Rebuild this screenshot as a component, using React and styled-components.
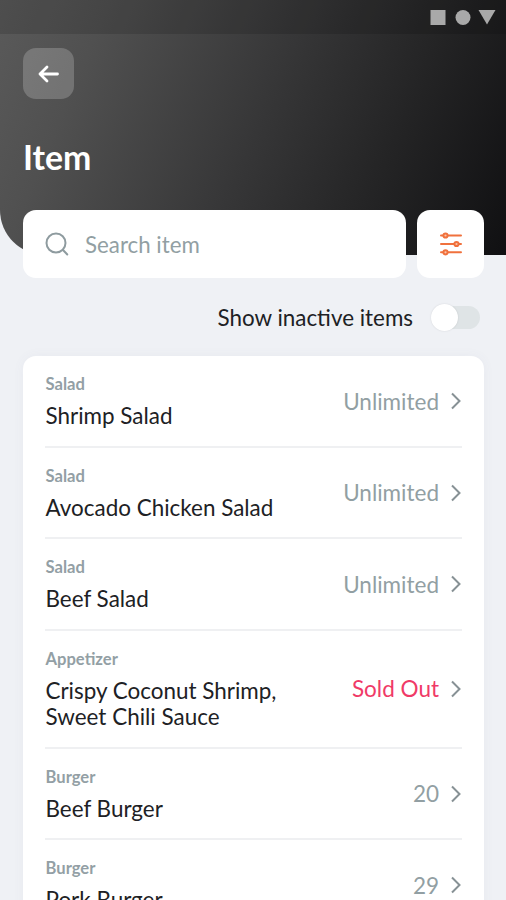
import React from 'react';
import styled, { createGlobalStyle } from 'styled-components';

const GlobalStyle = createGlobalStyle`
  * {
    box-sizing: border-box;
  }
  body {
    margin: 0;
    background: #eff1f5;
    font-family: Lato, 'Liberation Sans', sans-serif;
  }
`;

const Screen = styled.div`
  width: 506px;
  height: 900px;
  overflow: hidden;
  background: #eff1f5;
`;
const Header = styled.header`
  height: 255px;
  border-bottom-left-radius: 45px;
  background: linear-gradient(113deg, #5a5a5a 0%, #505050 18%, #363637 51%, #242425 74%, #101012 100%);
`;
const StatusBar = styled.div`
  display: flex;
  justify-content: flex-end;
  height: 34px;
  padding: 9px 10px 0 0;
  background: rgba(0, 0, 0, 0.13);
`;
const HeaderContent = styled.div`
  padding: 14px 23px 0;
`;
const BackButton = styled.button`
  display: flex;
  align-items: center;
  justify-content: center;
  width: 51px;
  height: 51px;
  padding: 0;
  border: none;
  border-radius: 13px;
  background: rgba(255, 255, 255, 0.2);
`;
const Title = styled.h1`
  margin: 37px 0 0;
  color: #fff;
  font-size: 33.8px;
  line-height: 42px;
  font-weight: 700;
`;
const Toolbar = styled.div`
  display: flex;
  gap: 11px;
  margin: -45px 22px 0 23px;
`;
const SearchBox = styled.label`
  display: flex;
  align-items: center;
  flex: 1;
  height: 68px;
  padding-left: 22px;
  gap: 16px;
  border-radius: 13px;
  background: #fff;
`;
const SearchText = styled.span`
  color: #929fa3;
  font-size: 22.3px;
`;
const FilterButton = styled.button`
  display: flex;
  align-items: center;
  justify-content: center;
  width: 67px;
  height: 68px;
  padding: 0;
  border: none;
  border-radius: 13px;
  background: #fff;
`;
const ToggleRow = styled.div`
  display: flex;
  align-items: center;
  justify-content: flex-end;
  gap: 17px;
  height: 78.4px;
  padding-right: 26px;
`;
const ToggleLabel = styled.span`
  color: #202124;
  font-size: 22.4px;
`;
const Toggle = styled.span`
  display: flex;
  align-items: center;
  width: 50px;
  height: 23px;
  background: linear-gradient(#dfe4e6, #dfe4e6) right / 44px 23px no-repeat;
  border-radius: 12px;
`;
const Knob = styled.span`
  flex: none;
  width: 27px;
  height: 27px;
  margin-left: 1px;
  border-radius: 50%;
  background: #fff;
  box-shadow: 0 0 2px rgba(0, 0, 0, 0.12);
`;
const List = styled.ul`
  margin: 0 22px 0 23px;
  padding: 0 22px;
  list-style: none;
  background: #fff;
  border-radius: 13px 13px 0 0;
  box-shadow: 0 0 12px rgba(90, 100, 130, 0.05);
`;
const Row = styled.li`
  display: flex;
  align-items: center;
  justify-content: space-between;
  height: ${({ $tall }) => ($tall ? '118px' : '91.5px')};
  border-bottom: 2px solid #eff0f2;
`;
const ItemText = styled.div`
  padding: 2px 0 0 0.5px;
`;
const Category = styled.div`
  color: #939fa5;
  font-size: 16.6px;
  line-height: 20px;
  font-weight: 700;
`;
const Name = styled.div`
  width: 250px;
  margin-top: 9px;
  color: #202124;
  font-size: 22.45px;
  line-height: 26.5px;
`;
const Stock = styled.div`
  display: flex;
  align-items: center;
  gap: 10px;
  color: ${({ $soldOut }) => ($soldOut ? '#f03a67' : '#929fa3')};
  font-size: 22.5px;
`;

const StatusIcons = () => (
  <svg width="66" height="17" viewBox="0 0 66 17" fill="#a9a9a9">
    <rect x="0.500" y="1" width="15" height="15" />
    <circle cx="33" cy="8.500" r="7.500" />
    <path d="M48.500 1h17L57 15.500z" />
  </svg>
);

const BackIcon = () => (
  <svg width="22" height="20" viewBox="0 0 22 20" fill="none" stroke="#fff" strokeWidth="2.8" strokeLinecap="round" strokeLinejoin="round">
    <path d="M19.500 10H2M9 3L2 10l7 7" />
  </svg>
);

const SearchIcon = () => (
  <svg width="24" height="24" viewBox="0 0 24 24" fill="none" stroke="#8e9b9f" strokeWidth="2" strokeLinecap="round">
    <circle cx="11" cy="11" r="9.500" />
    <path d="M18 18l4.300 4.500" />
  </svg>
);

const FilterIcon = () => (
  <svg width="24" height="24" viewBox="0 0 24 24" fill="#f9c5ab" stroke="#f0713d" strokeWidth="2" strokeLinecap="round">
    <path d="M2 3.500h20M2 12h20M2 20.300h20" />
    <circle cx="6.500" cy="3.500" r="2.100" />
    <circle cx="17.500" cy="12" r="2.100" />
    <circle cx="6.500" cy="20.300" r="2.100" />
  </svg>
);

const Chevron = () => (
  <svg width="13" height="18" viewBox="0 0 13 18" fill="none" stroke="#879195" strokeWidth="2">
    <path d="M3 1.500l7.500 7.500L3 16.500" />
  </svg>
);

const items = [
  { category: 'Salad', name: 'Shrimp Salad', stock: 'Unlimited' },
  { category: 'Salad', name: 'Avocado Chicken Salad', stock: 'Unlimited' },
  { category: 'Salad', name: 'Beef Salad', stock: 'Unlimited' },
  { category: 'Appetizer', name: 'Crispy Coconut Shrimp, Sweet Chili Sauce', stock: 'Sold Out', soldOut: true, tall: true },
  { category: 'Burger', name: 'Beef Burger', stock: '20' },
  { category: 'Burger', name: 'Pork Burger', stock: '29' },
];

const App = () => (
  <>
    <GlobalStyle />
    <Screen>
      <Header>
        <StatusBar><StatusIcons /></StatusBar>
        <HeaderContent>
          <BackButton aria-label="Back"><BackIcon /></BackButton>
          <Title>Item</Title>
        </HeaderContent>
      </Header>
      <Toolbar>
        <SearchBox>
          <SearchIcon />
          <SearchText>Search item</SearchText>
        </SearchBox>
        <FilterButton aria-label="Filter"><FilterIcon /></FilterButton>
      </Toolbar>
      <ToggleRow>
        <ToggleLabel>Show inactive items</ToggleLabel>
        <Toggle><Knob /></Toggle>
      </ToggleRow>
      <List>
        {items.map((item) => (
          <Row key={item.name} $tall={item.tall}>
            <ItemText>
              <Category>{item.category}</Category>
              <Name>{item.name}</Name>
            </ItemText>
            <Stock $soldOut={item.soldOut}>
              {item.stock}
              <Chevron />
            </Stock>
          </Row>
        ))}
      </List>
    </Screen>
  </>
);

export default App;
